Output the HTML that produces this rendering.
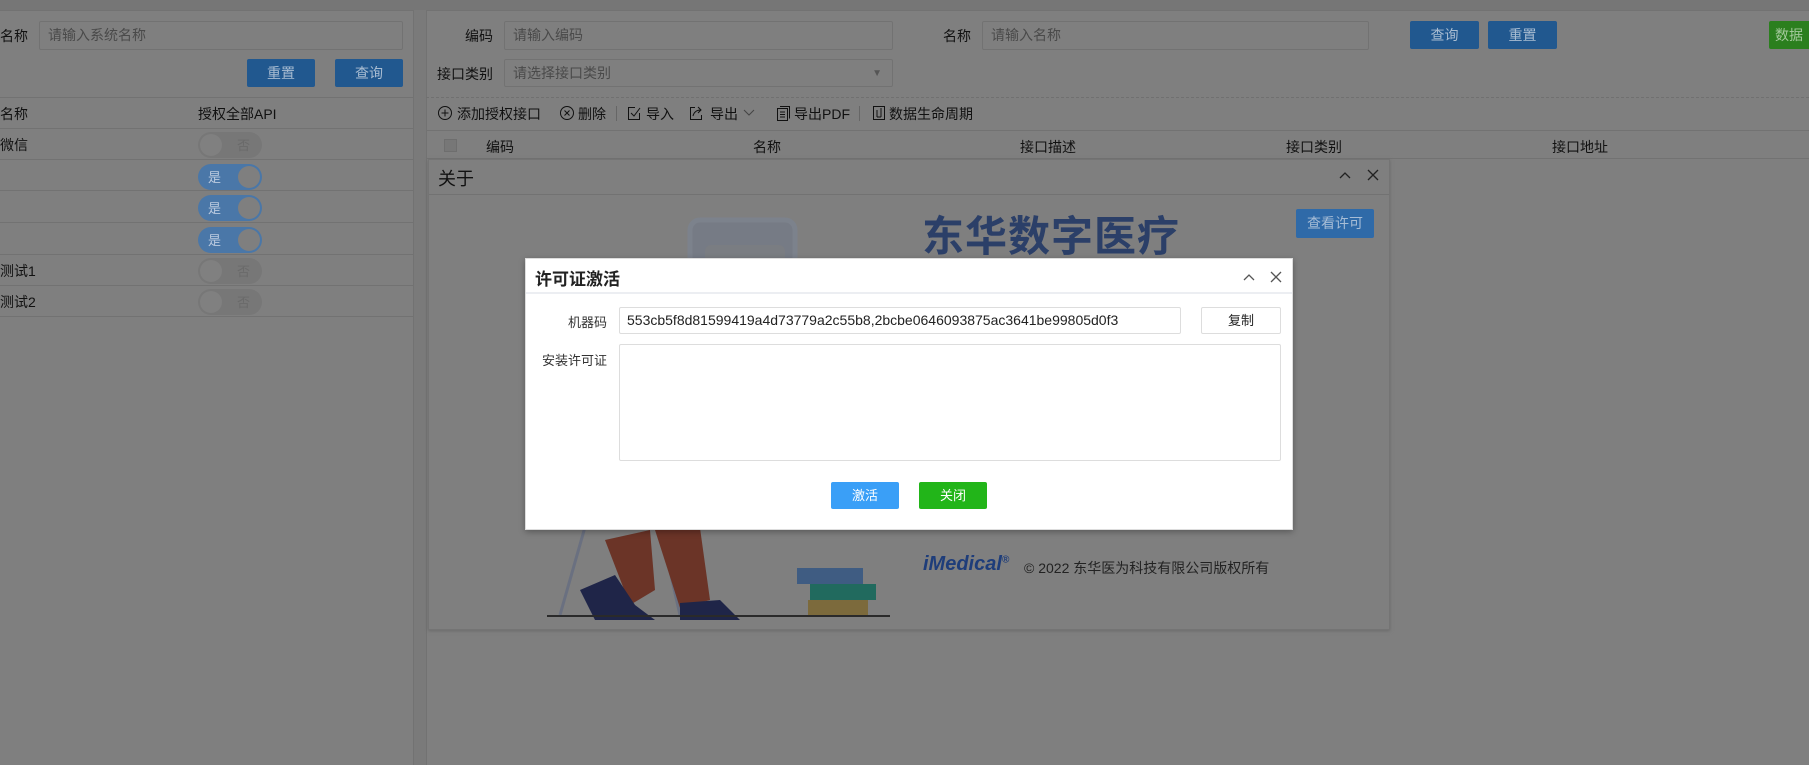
<!DOCTYPE html>
<html><head><meta charset="utf-8"><style>
*{box-sizing:border-box;margin:0;padding:0}
body{width:1809px;height:765px;overflow:hidden;background:#7f7f7f;font-family:"Liberation Sans","Noto Sans CJK SC",sans-serif;font-size:14px;color:#111;position:relative}
.a{position:absolute;white-space:nowrap}
.inp{position:absolute;border:1px solid #727272;background:#7f7f7f;color:#4a4a4a;font-size:14px;padding-left:8px;line-height:27px;border-radius:2px}
.btn{position:absolute;background:#21588f;color:#a9bdd2;text-align:center;font-size:14px;line-height:28px;border-radius:2px}
.ln{position:absolute;height:1px;background:#727272}
.tg{position:absolute;width:64px;height:26px;border-radius:13px}
.on{background:#4a77a8}
.on::after{content:"";position:absolute;right:2px;top:2px;width:22px;height:22px;border-radius:50%;background:#7f7f7f}
.on span{position:absolute;left:10px;top:3px;color:#bccbe0;font-size:13px}
.off{background:#777}
.off::after{content:"";position:absolute;left:2px;top:2px;width:22px;height:22px;border-radius:50%;background:#808080}
.off span{position:absolute;right:12px;top:3px;color:#6a6a6a;font-size:13px}
.ic{position:absolute;top:105px}
</style></head><body>
<div class="a" style="left:0;top:0;width:1809px;height:10px;background:#767676"></div>
<div class="a" style="left:0;top:10px;width:414px;height:755px;border-right:1px solid #727272;border-top:1px solid #727272"></div>
<div class="a" style="left:414px;top:10px;width:12px;height:755px;background:#7a7a7a"></div>
<div class="a" style="left:0;top:26px">名称</div>
<div class="inp" style="left:39px;top:21px;width:364px;height:29px">请输入系统名称</div>
<div class="btn" style="left:247px;top:59px;width:68px">重置</div>
<div class="btn" style="left:335px;top:59px;width:68px">查询</div>
<div class="ln" style="left:0;top:97px;width:414px"></div>
<div class="a" style="left:0;top:104px">名称</div>
<div class="a" style="left:198px;top:104px">授权全部API</div>
<div class="ln" style="left:0;top:128px;width:414px"></div>
<div class="a" style="left:0;top:135px">微信</div>
<div class="tg off" style="left:198px;top:132px"><span>否</span></div>
<div class="ln" style="left:0;top:159px;width:414px"></div>
<div class="tg on" style="left:198px;top:164px"><span>是</span></div>
<div class="ln" style="left:0;top:190px;width:414px"></div>
<div class="tg on" style="left:198px;top:195px"><span>是</span></div>
<div class="ln" style="left:0;top:222px;width:414px"></div>
<div class="tg on" style="left:198px;top:227px"><span>是</span></div>
<div class="ln" style="left:0;top:254px;width:414px"></div>
<div class="a" style="left:0;top:261px">测试1</div>
<div class="tg off" style="left:198px;top:258px"><span>否</span></div>
<div class="ln" style="left:0;top:285px;width:414px"></div>
<div class="a" style="left:0;top:292px">测试2</div>
<div class="tg off" style="left:198px;top:289px"><span>否</span></div>
<div class="ln" style="left:0;top:316px;width:414px"></div>
<div class="a" style="left:426px;top:10px;width:1383px;height:755px;border-left:1px solid #727272;border-top:1px solid #727272"></div>
<div class="a" style="left:465px;top:26px">编码</div>
<div class="inp" style="left:504px;top:21px;width:389px;height:29px">请输入编码</div>
<div class="a" style="left:943px;top:26px">名称</div>
<div class="inp" style="left:982px;top:21px;width:387px;height:29px">请输入名称</div>
<div class="btn" style="left:1410px;top:21px;width:69px">查询</div>
<div class="btn" style="left:1488px;top:21px;width:69px">重置</div>
<div class="btn" style="left:1769px;top:21px;width:50px;background:#2b7f1e;color:#a4c99c;text-align:left;padding-left:6px">数据</div>
<div class="a" style="left:437px;top:64px">接口类别</div>
<div class="inp" style="left:504px;top:59px;width:389px;height:28px">请选择接口类别<span style="position:absolute;right:10px;font-size:10px;color:#555">▼</span></div>
<div class="a" style="left:426px;top:97px;width:1383px;border-top:1px dashed #707070"></div>
<svg class="ic" style="left:437px" width="16" height="16"><circle cx="8" cy="8" r="6.5" fill="none" stroke="#111"/><path d="M8 4.5v7M4.5 8h7" stroke="#111"/></svg>
<div class="a" style="left:457px;top:104px">添加授权接口</div>
<svg class="ic" style="left:559px" width="16" height="16"><circle cx="8" cy="8" r="6.5" fill="none" stroke="#111"/><path d="M5.5 5.5l5 5M10.5 5.5l-5 5" stroke="#111"/></svg>
<div class="a" style="left:578px;top:104px">删除</div>
<div class="a" style="left:616px;top:106px;width:1px;height:15px;background:#666"></div>
<svg class="ic" style="left:626px" width="16" height="16"><path d="M9 2.5H2.5v12h11V8" fill="none" stroke="#111"/><path d="M5 8l3 3 6-8" fill="none" stroke="#111"/></svg>
<div class="a" style="left:646px;top:104px">导入</div>
<svg class="ic" style="left:688px" width="16" height="16"><path d="M7 2.5H2.5v12h11V10" fill="none" stroke="#111"/><path d="M5 11c1-4 4-6 8-6M10 2l3 3-3 3" fill="none" stroke="#111"/></svg>
<div class="a" style="left:710px;top:104px">导出</div>
<svg class="ic" style="left:743px;top:108px" width="12" height="10"><path d="M1 2l5 5 5-5" fill="none" stroke="#444"/></svg>
<svg class="ic" style="left:775px" width="16" height="16"><rect x="2.5" y="3.5" width="10" height="12" fill="none" stroke="#111"/><path d="M5 1.5h9.5v12M5 7h5M5 9.5h5M5 12h5" fill="none" stroke="#111"/></svg>
<div class="a" style="left:794px;top:104px">导出PDF</div>
<div class="a" style="left:859px;top:106px;width:1px;height:15px;background:#666"></div>
<svg class="ic" style="left:871px" width="16" height="16"><rect x="2.5" y="1.5" width="11" height="13" fill="none" stroke="#111"/><path d="M6 5v7M10 3v9M6 12h4" fill="none" stroke="#111"/></svg>
<div class="a" style="left:889px;top:104px">数据生命周期</div>
<div class="ln" style="left:426px;top:130px;width:1383px"></div>
<div class="a" style="left:444px;top:139px;width:13px;height:13px;background:#777;border:1px solid #6e6e6e"></div>
<div class="a" style="left:486px;top:137px">编码</div>
<div class="a" style="left:753px;top:137px">名称</div>
<div class="a" style="left:1020px;top:137px">接口描述</div>
<div class="a" style="left:1286px;top:137px">接口类别</div>
<div class="a" style="left:1552px;top:137px">接口地址</div>
<div class="ln" style="left:426px;top:158px;width:1383px"></div>
<div class="a" style="left:428px;top:159px;width:962px;height:471px;border:1px solid #747474;background:#7f7f7f;box-shadow:0 1px 3px #6a6a6a"></div>
<div class="a" style="left:438px;top:165px;font-size:18px">关于</div>
<svg class="a" style="left:1338px;top:168px" width="46" height="14"><path d="M2 10l5-5 5 5M30 2l10 10M40 2l-10 10" fill="none" stroke="#222" stroke-width="1.3"/></svg>
<div class="ln" style="left:429px;top:194px;width:960px"></div>
<div class="a" style="left:922px;top:203px;font-size:42px;font-weight:bold;color:#2b3f68;letter-spacing:1px">东华数字医疗</div>
<div class="btn" style="left:1296px;top:209px;width:78px;height:29px;line-height:29px;background:#2f6aa8;color:#a7bdd6">查看许可</div>
<svg class="a" style="left:540px;top:210px" width="360" height="420" viewBox="0 0 360 420">
<rect x="150" y="10" width="105" height="120" rx="10" fill="#767b85" stroke="#7c828c" stroke-width="5"/>
<rect x="165" y="35" width="80" height="60" rx="6" fill="#7a7d82"/>
<line x1="45" y1="317" x2="20" y2="405" stroke="#6a7080" stroke-width="3"/>
<line x1="120" y1="317" x2="140" y2="405" stroke="#6a7080" stroke-width="3"/>
<path d="M65 330 L110 320 L115 380 L90 395 Z" fill="#6b3427"/>
<path d="M115 320 L160 318 L170 390 L140 398 Z" fill="#6b3427"/>
<path d="M40 380 L75 365 L95 395 L115 410 L55 410 Z" fill="#1f2548"/>
<path d="M140 393 L180 390 L200 410 L140 410 Z" fill="#1f2548"/>
<rect x="257" y="358" width="66" height="16" fill="#3f5c82"/>
<rect x="270" y="374" width="66" height="16" fill="#216a5e"/>
<rect x="268" y="390" width="60" height="16" fill="#7c6a3c"/>
<line x1="7" y1="406" x2="350" y2="406" stroke="#2a2a2a" stroke-width="2"/>
</svg>
<div class="a" style="left:923px;top:553px;font-size:20px;font-weight:bold;font-style:italic;color:#1e3d7a">iMedical<sup style="font-size:10px">®</sup></div>
<div class="a" style="left:1024px;top:558px;font-size:14px;color:#222">© 2022 东华医为科技有限公司版权所有</div>
<div class="a" style="left:525px;top:258px;width:768px;height:272px;background:#fff;border:1px solid #ddd;box-shadow:0 2px 6px rgba(0,0,0,.3)"></div>
<div class="a" style="left:535px;top:265px;font-size:17px;font-weight:bold;color:#222">许可证激活</div>
<svg class="a" style="left:1242px;top:270px" width="44" height="14"><path d="M2 10l5-5 5 5M29 2l10 10M39 2l-10 10" fill="none" stroke="#555" stroke-width="1.3"/></svg>
<div class="a" style="left:526px;top:292px;width:766px;height:2px;background:#eceef2"></div>
<div class="a" style="left:560px;top:312px;width:47px;text-align:right;font-size:13px;color:#333">机器码</div>
<div class="a" style="left:619px;top:307px;width:562px;height:27px;border:1px solid #ddd;border-radius:2px;font-size:14px;color:#222;padding-left:7px;line-height:25px">553cb5f8d81599419a4d73779a2c55b8,2bcbe0646093875ac3641be99805d0f3</div>
<div class="a" style="left:1201px;top:307px;width:80px;height:27px;border:1px solid #ddd;border-radius:2px;font-size:13px;text-align:center;line-height:25px;color:#222">复制</div>
<div class="a" style="left:530px;top:350px;width:77px;text-align:right;font-size:13px;color:#333">安装许可证</div>
<div class="a" style="left:619px;top:344px;width:662px;height:117px;border:1px solid #ddd;border-radius:2px"></div>
<div class="a" style="left:831px;top:482px;width:68px;height:27px;background:#3a9ff7;color:#fff;text-align:center;line-height:27px;font-size:13px;border-radius:2px">激活</div>
<div class="a" style="left:919px;top:482px;width:68px;height:27px;background:#22b519;color:#fff;text-align:center;line-height:27px;font-size:13px;border-radius:2px">关闭</div>
</body></html>
